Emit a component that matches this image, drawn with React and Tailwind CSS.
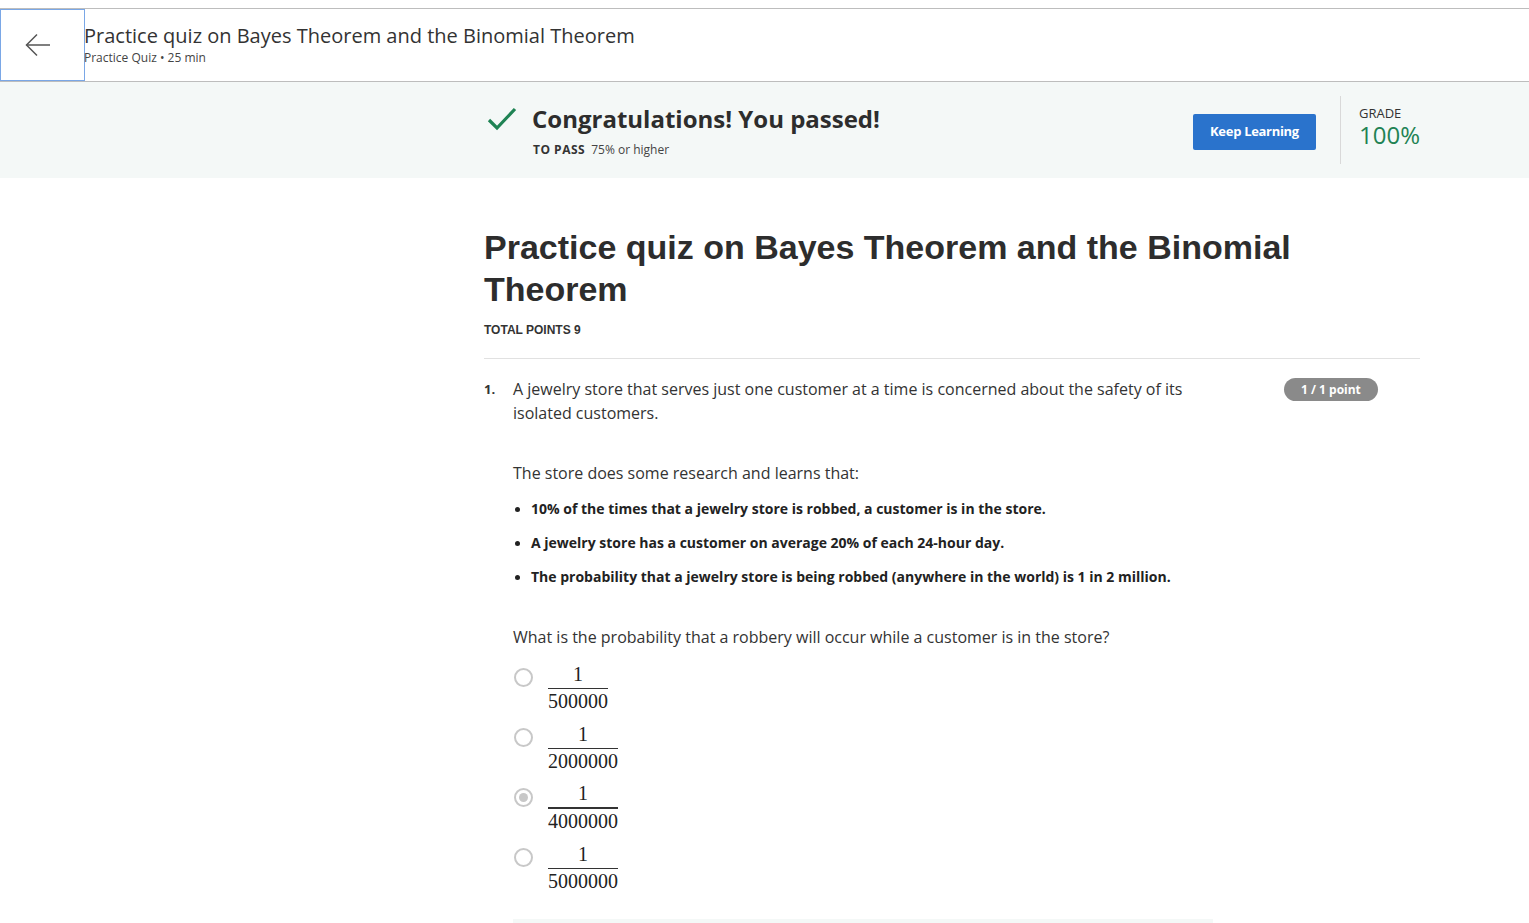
import React from "react";

const os = { fontFamily: '"Open Sans", "Noto Sans", sans-serif' };
const serif = { fontFamily: '"Liberation Serif", "DejaVu Serif", serif' };

function Frac({ den, heavy }) {
  return (
    <div className="inline-flex flex-col items-center text-[20px] leading-none text-[#222]" style={serif}>
      <span className="pb-[4px]">1</span>
      <span className={`w-full ${heavy ? "h-[2px]" : "h-px"} bg-[#333]`} />
      <span className="pt-[2px]">{den}</span>
    </div>
  );
}

function Option({ den, selected }) {
  return (
    <div className="flex items-center h-[60px]">
      <div className="w-[19px] h-[19px] rounded-full border-2 border-[#c8c8c8] flex items-center justify-center ml-[1px] mr-[15px] -mt-[20px]">
        {selected && <div className="w-[9px] h-[9px] rounded-full bg-[#c8c8c8]" />}
      </div>
      <Frac den={den} heavy={selected} />
    </div>
  );
}

export default function App() {
  return (
    <div className="w-[1529px] h-[923px] overflow-hidden bg-white text-[#1f1f1f]" style={os}>
      <div className="h-[8px]" />
      {/* Header */}
      <div className="flex h-[74px] border-t border-b border-[#bdbdbd]">
        <div className="w-[85px] h-[72px] border border-[#7aa7e6] flex items-center pl-[23px]">
          <svg width="28" height="28" viewBox="0 0 28 28" fill="none" stroke="#555" strokeWidth="1.5">
            <path d="M26 14H2.5" />
            <path d="M13 3.5L2.5 14L13 24.5" />
          </svg>
        </div>
        <div className="flex flex-col pt-[13px] -ml-[1px]">
          <div className="text-[20px] leading-[28px] text-[#333] font-normal">
            Practice quiz on Bayes Theorem and the Binomial Theorem
          </div>
          <div className="text-[12px] leading-[16px] text-[#444]">Practice Quiz • 25 min</div>
        </div>
      </div>
      {/* Banner */}
      <div className="h-[96px] bg-[#f4f8f7] flex">
        <div className="w-[484px]" />
        <div className="w-[936px] flex items-start">
          <div className="flex-1 flex pt-[22px]">
            <svg width="32" height="28" viewBox="0 0 32 28" className="mt-[1px] ml-[3px]" fill="none" stroke="#1f8354" strokeWidth="3.2">
              <path d="M2 15L10 23L28 4" />
            </svg>
            <div className="ml-[13px]">
              <div className="text-[24px] leading-[32px] font-bold text-[#2d2d2d] -mt-[1px]">Congratulations! You passed!</div>
              <div className="text-[12px] leading-[16px] mt-[7px] ml-[1px] text-[#444]">
                <span className="font-bold tracking-[0.5px] text-[#333]">TO PASS</span>
                <span className="ml-[6px]">75% or higher</span>
              </div>
            </div>
          </div>
          <div className="pt-[32px]">
            <div className="w-[123px] h-[36px] bg-[#2a73cc] rounded-[2px] flex items-center justify-center text-white text-[13px] font-bold tracking-[-0.3px]">
              Keep Learning
            </div>
          </div>
          <div className="w-px h-[68px] bg-[#d9d9d9] ml-[24px] mt-[14px]" />
          <div className="pl-[18px] pt-[23px]">
            <div className="text-[13px] leading-[16px] text-[#333]">GRADE</div>
            <div className="text-[24px] leading-[26px] mt-[1px] text-[#1f8354]">100%</div>
          </div>
        </div>
      </div>
      {/* Main */}
      <div className="flex">
        <div className="w-[484px]" />
        <div className="w-[936px] pt-[48px]">
          <h1
            className="text-[34px] leading-[42px] font-bold text-[#2d2d2d]"
            style={{ fontFamily: '"Liberation Sans", Arial, sans-serif' }}
          >
            Practice quiz on Bayes Theorem and the Binomial
            <br />
            Theorem
          </h1>
          <div
            className="mt-[12px] text-[12px] leading-[16px] font-bold text-[#333]"
            style={{ fontFamily: '"Liberation Sans", Arial, sans-serif' }}
          >
            TOTAL POINTS 9
          </div>
          <div className="mt-[20px] h-px bg-[#e1e1e1]" />
          <div className="flex pt-[18px]">
            <div className="w-[29px] text-[13px] font-bold leading-[24px] text-[#333]">1.</div>
            <div className="flex-1 text-[16px] leading-[24px] text-[#333]">
              <div className="flex items-start">
                <div className="w-[700px]">
                  A jewelry store that serves just one customer at a time is concerned about the safety of its isolated customers.
                </div>
                <div className="ml-[71px] mt-[1px] h-[23px] px-[17px] rounded-full bg-[#8a8a8a] text-white text-[12px] font-bold flex items-center">
                  1 / 1 point
                </div>
              </div>
              <div className="mt-[36px]">The store does some research and learns that:</div>
              <ul className="mt-[12px] text-[14px] font-bold text-[#222] flex flex-col gap-[10px]">
                {[
                  "10% of the times that a jewelry store is robbed, a customer is in the store.",
                  "A jewelry store has a customer on average 20% of each 24-hour day.",
                  "The probability that a jewelry store is being robbed (anywhere in the world) is 1 in 2 million.",
                ].map((t) => (
                  <li key={t} className="flex items-center leading-[24px]">
                    <span className="w-[5px] h-[5px] rounded-full bg-[#222] ml-[2px] mr-[11px]" />
                    {t}
                  </li>
                ))}
              </ul>
              <div className="mt-[36px]">What is the probability that a robbery will occur while a customer is in the store?</div>
              <div className="mt-[8px] flex flex-col">
                <Option den="500000" />
                <Option den="2000000" />
                <Option den="4000000" selected />
                <Option den="5000000" />
              </div>
              <div className="mt-[22px] w-[700px] h-[20px] bg-[#f4f8f7]" />
            </div>
          </div>
        </div>
      </div>
    </div>
  );
}
